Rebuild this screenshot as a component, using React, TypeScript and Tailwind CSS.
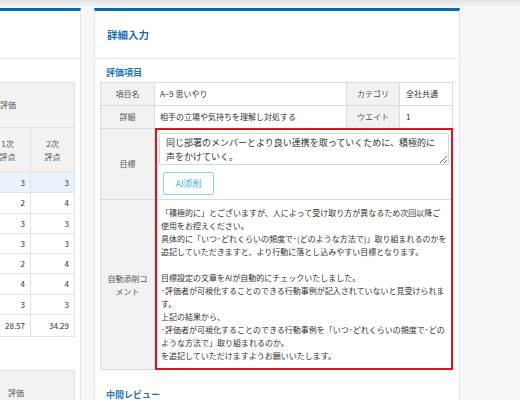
import React from "react";

const rows = [
  { a: "3", b: "3", h: "h-[20px]", hl: true },
  { a: "2", b: "4", h: "h-[21px]", hl: false },
  { a: "3", b: "3", h: "h-[20px]", hl: false },
  { a: "3", b: "3", h: "h-[20px]", hl: false },
  { a: "2", b: "4", h: "h-[20px]", hl: false },
  { a: "4", b: "4", h: "h-[21px]", hl: false },
  { a: "3", b: "3", h: "h-[20px]", hl: false },
  { a: "28.57", b: "34.29", h: "h-[22px]", hl: false },
];

const comment = [
  "「積極的に」とございますが、人によって受け取り方が異なるため次回以降ご",
  "使用をお控えください。",
  "具体的に「いつ･どれくらいの頻度で･(どのような方法で)」取り組まれるのかを",
  "追記していただきますと、より行動に落とし込みやすい目標となります。",
  "",
  "目標設定の文章をAIが自動的にチェックいたしました。",
  "･評価者が可視化することのできる行動事例が記入されていないと見受けられま",
  "す。",
  "上記の結果から、",
  "･評価者が可視化することのできる行動事例を「いつ･どれくらいの頻度で･どの",
  "ような方法で」取り組まれるのか。",
  "を追記していただけますようお願いいたします。",
];

export default function App() {
  return (
    <div className="w-[520px] h-[400px] overflow-hidden bg-[#f7f7f7] font-['Noto_Sans_CJK_JP',sans-serif] text-[#333]">
      <div className="h-[8px] bg-linear-to-b from-[#e2e2e2] to-[#f7f7f7]" />
      <div className="flex items-start gap-[13px]">
        {/* Left panel */}
        <div className="w-[81px] h-[392px] shrink-0 overflow-hidden bg-white border-t-[3px] border-t-[#0b67b8] border-r border-r-[#e6e6e6]">
          <div className="h-[48px] border-b border-[#e8e8e8]" />
          <div className="pt-[23px]">
            <div className="ml-[-16px] w-[91px] border-l border-t border-[#e3e3e3] text-[8px]">
              <div className="h-[45px] border-b border-r border-[#e3e3e3] bg-[#f2f2f2] flex items-center pl-[15px] text-[#555]">
                評価
              </div>
              <div className="h-[45px] flex border-b border-[#e3e3e3] bg-[#f2f2f2] text-[#555] leading-[13px]">
                <div className="w-[46px] border-r border-[#e3e3e3] flex items-center justify-center text-center">
                  1次<br />評点
                </div>
                <div className="w-[44px] border-r border-[#e3e3e3] flex items-center justify-center text-center">
                  2次<br />評点
                </div>
              </div>
              {rows.map((r, i) => (
                <div
                  key={i}
                  className={`${r.h} flex border-b border-[#e3e3e3] ${r.hl ? "bg-[#e9f3fc]" : "bg-white"}`}
                >
                  <div className="w-[46px] border-r border-[#e3e3e3] flex items-center justify-end pr-[5px]">
                    {r.a}
                  </div>
                  <div className="w-[44px] border-r border-[#e3e3e3] flex items-center justify-end pr-[5px]">
                    {r.b}
                  </div>
                </div>
              ))}
            </div>
            <div className="mt-[33px] ml-[-16px] w-[91px] h-[60px] border-l border-t border-r border-[#e3e3e3] bg-[#f2f2f2] text-[8px] text-[#555] pl-[23px] pt-[16px]">
              評価
            </div>
          </div>
        </div>

        {/* Right panel */}
        <div className="w-[366px] h-[392px] shrink-0 bg-white border-t-[3px] border-t-[#0b67b8] border-x border-x-[#e6e6e6]">
          <div className="h-[48px] border-b border-[#e8e8e8] flex items-center pl-[12px]">
            <h1 className="text-[10.5px] font-bold text-[#1e6bb8]">詳細入力</h1>
          </div>
          <div className="pl-[5px] pr-[6px]">
            <div className="pt-[7px] pb-[2px] pl-[6px]">
              <h2 className="h-[14px] leading-[14px] text-[9px] font-bold text-[#1e74c0]">評価項目</h2>
            </div>
            <div className="border-l border-t border-[#dcdcdc] text-[8px]">
              <div className="h-[23px] flex border-b border-[#dcdcdc]">
                <div className="w-[54px] bg-[#f2f2f2] border-r border-[#dcdcdc] flex items-center justify-center text-[#555]">項目名</div>
                <div className="w-[192px] border-r border-[#dcdcdc] flex items-center pl-[5px]">A−9 思いやり</div>
                <div className="w-[53px] bg-[#f2f2f2] border-r border-[#dcdcdc] flex items-center justify-center text-[#555]">カテゴリ</div>
                <div className="w-[53px] border-r border-[#dcdcdc] flex items-center pl-[6px]">全社共通</div>
              </div>
              <div className="h-[23px] flex border-b border-[#dcdcdc]">
                <div className="w-[54px] bg-[#f2f2f2] border-r border-[#dcdcdc] flex items-center justify-center text-[#555]">詳細</div>
                <div className="w-[192px] border-r border-[#dcdcdc] flex items-center pl-[5px]">相手の立場や気持ちを理解し対処する</div>
                <div className="w-[53px] bg-[#f2f2f2] border-r border-[#dcdcdc] flex items-center justify-center text-[#555]">ウエイト</div>
                <div className="w-[53px] border-r border-[#dcdcdc] flex items-center pl-[6px]">1</div>
              </div>
              <div className="flex">
                <div className="w-[54px] shrink-0 bg-[#f2f2f2] border-r border-b border-[#dcdcdc] text-[#555] flex flex-col">
                  <div className="h-[71px] border-b border-[#dcdcdc] flex items-center justify-center">目標</div>
                  <div className="h-[169px] flex items-center justify-center text-center px-[5px] leading-[13px]">
                    自動添削コメント
                  </div>
                </div>
                <div className="flex-1 -mt-px border-2 border-[#e0121d] flex flex-col">
                  <div className="h-[70px] border-b border-[#dcdcdc] pt-[3px] px-[2px]">
                    <textarea
                      className="block w-full h-[32px] border border-[#d6d6d6] rounded-[2px] px-[6px] pt-[2px] text-[9px] leading-[14px] text-[#333] outline-none"
                      defaultValue="同じ部署のメンバーとより良い連携を取っていくために、積極的に声をかけていく。"
                    />
                    <button className="mt-[7px] ml-[4px] w-[51px] h-[23px] border border-[#8dd3ea] rounded-[2px] bg-white text-[9px] text-[#45b3dd]">
                      AI添削
                    </button>
                  </div>
                  <div className="flex-1 pt-[6px] pl-[4px] text-[8px] leading-[13px] text-[#333]">
                    {comment.map((l, i) => (
                      <div key={i} className="h-[13px] whitespace-nowrap">
                        {l}
                      </div>
                    ))}
                  </div>
                </div>
              </div>
            </div>
            <div className="pt-[18px] pl-[6px]">
              <h2 className="h-[14px] leading-[14px] text-[9px] font-bold text-[#1e74c0]">中間レビュー</h2>
            </div>
          </div>
        </div>
      </div>
    </div>
  );
}
